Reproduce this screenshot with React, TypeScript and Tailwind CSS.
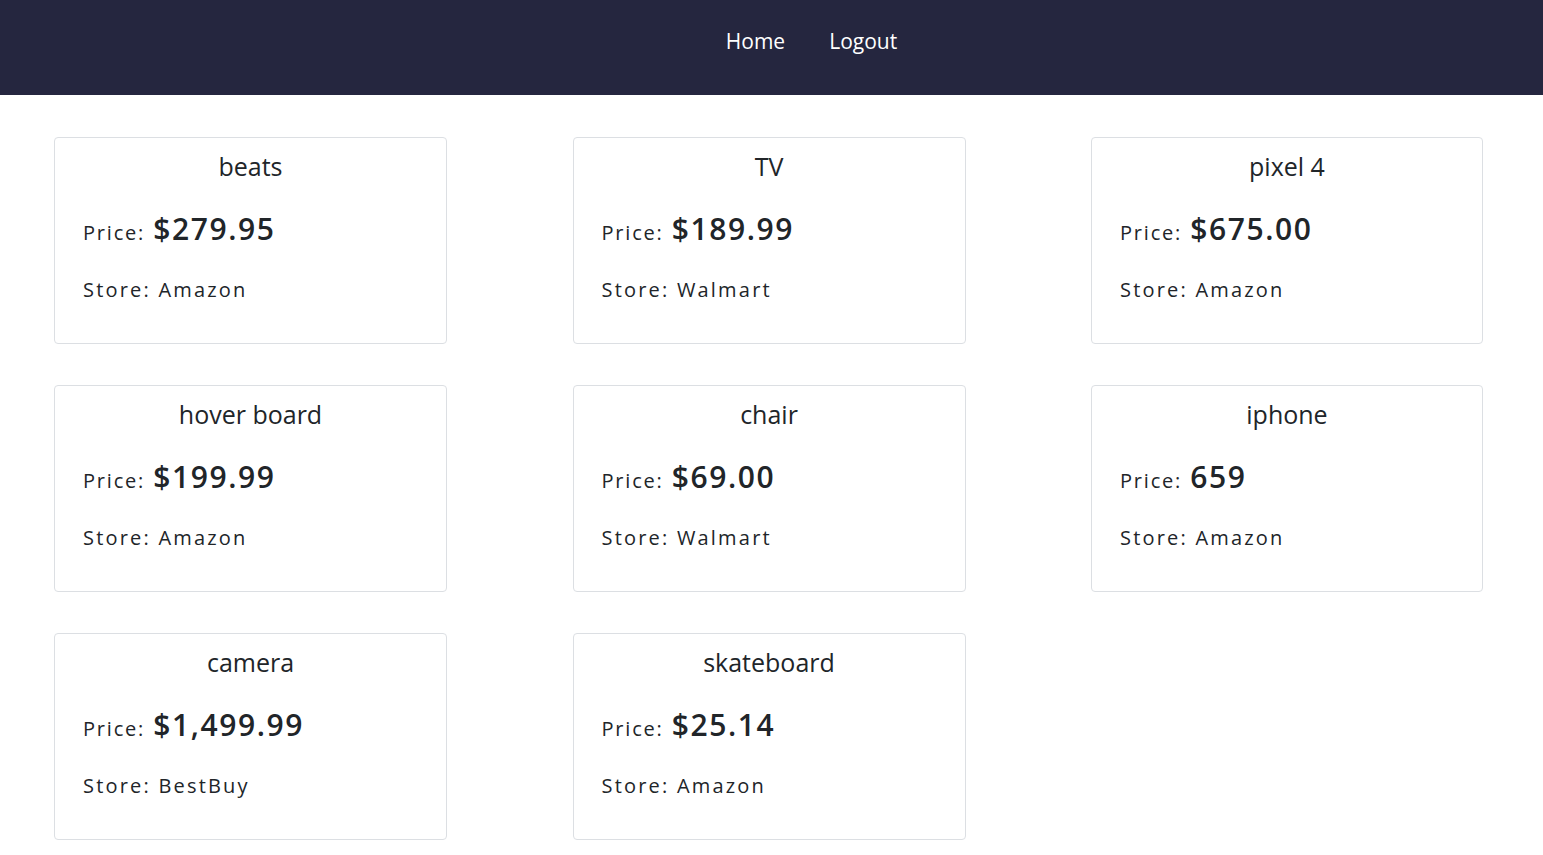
import React from "react";

const products = [
  { name: "beats", price: "$279.95", store: "Amazon" },
  { name: "TV", price: "$189.99", store: "Walmart" },
  { name: "pixel 4", price: "$675.00", store: "Amazon" },
  { name: "hover board", price: "$199.99", store: "Amazon" },
  { name: "chair", price: "$69.00", store: "Walmart" },
  { name: "iphone", price: "659", store: "Amazon" },
  { name: "camera", price: "$1,499.99", store: "BestBuy" },
  { name: "skateboard", price: "$25.14", store: "Amazon" },
];

const ProductCard = ({ name, price, store }: { name: string; price: string; store: string }) => (
  <div className="h-[207px] border border-[#dcdfe3] rounded-[4px] bg-white px-[28px] pt-[11px]">
    <h2 className="text-center text-[25px] leading-[34px] text-[#212529]">{name}</h2>
    <div className="mt-[26px] flex items-baseline text-[#212529]">
      <span className="text-[20px] tracking-[1.8px] mr-[8px]">Price:</span>
      <span className="text-[30px] font-semibold tracking-[1.6px] leading-[40px]">{price}</span>
    </div>
    <p className="mt-[26px] text-[20px] tracking-[2.2px] text-[#212529]">Store: {store}</p>
  </div>
);

export default function App() {
  return (
    <div className="min-h-screen bg-white" style={{ fontFamily: '"Open Sans", "Noto Sans", sans-serif' }}>
      <nav className="h-[95px] bg-[#25263f] flex items-center justify-center pl-[80px] pb-[12px] gap-[44px]">
        <a className="text-white text-[21px]">Home</a>
        <a className="text-white text-[21px]">Logout</a>
      </nav>
      <main className="pl-[54px] pt-[42px] grid grid-cols-[393px_393px_392px] gap-x-[125.5px] gap-y-[41px]">
        {products.map((p) => (
          <ProductCard key={p.name} {...p} />
        ))}
      </main>
    </div>
  );
}
